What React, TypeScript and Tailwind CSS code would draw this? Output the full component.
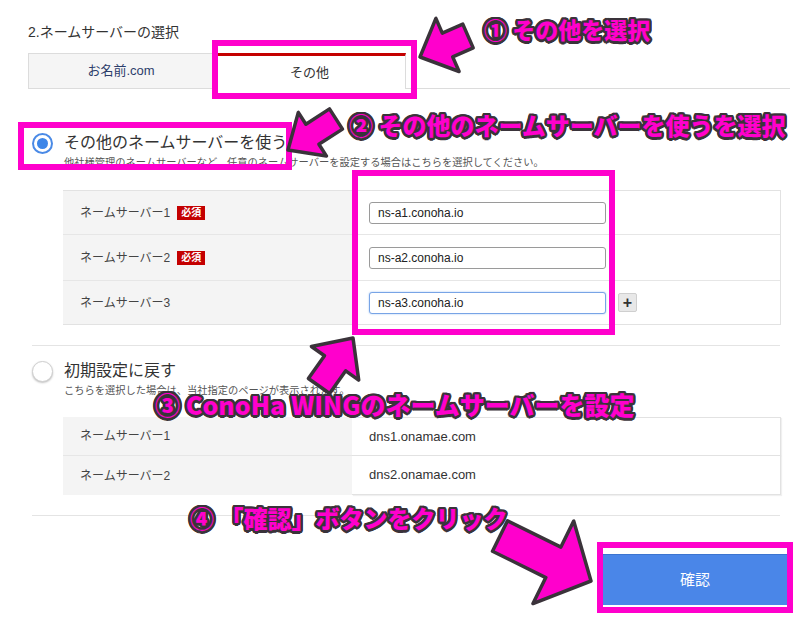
import React from 'react';

type Pt = [number, number];

// polygon for a fat annotation arrow, from tail to tip
function arrowPoints(tail: Pt, tip: Pt, shaft: number, head: number, headLen: number) {
  const dx = tip[0] - tail[0];
  const dy = tip[1] - tail[1];
  const len = Math.hypot(dx, dy);
  const ux = dx / len;
  const uy = dy / len;
  const px = -uy;
  const py = ux;
  const bx = tip[0] - ux * headLen;
  const by = tip[1] - uy * headLen;
  const pts: Pt[] = [
    [tail[0] + (px * shaft) / 2, tail[1] + (py * shaft) / 2],
    [bx + (px * shaft) / 2, by + (py * shaft) / 2],
    [bx + (px * head) / 2, by + (py * head) / 2],
    tip,
    [bx - (px * head) / 2, by - (py * head) / 2],
    [bx - (px * shaft) / 2, by - (py * shaft) / 2],
    [tail[0] - (px * shaft) / 2, tail[1] - (py * shaft) / 2],
  ];
  return pts.map((p) => `${p[0].toFixed(1)},${p[1].toFixed(1)}`).join(' ');
}

const arrows = [
  { tail: [468, 36] as Pt, tip: [420, 57] as Pt, shaft: 26, head: 58, headLen: 30 },
  { tail: [336, 119] as Pt, tip: [288, 150] as Pt, shaft: 24, head: 52, headLen: 29 },
  { tail: [319, 386] as Pt, tip: [353, 338] as Pt, shaft: 26, head: 58, headLen: 31 },
  { tail: [500, 536] as Pt, tip: [591, 581] as Pt, shaft: 34, head: 92, headLen: 42 },
];

const nsRows = [
  { label: 'ネームサーバー1', required: true, value: 'ns-a1.conoha.io', focus: false, h: 'h-[43px]' },
  { label: 'ネームサーバー2', required: true, value: 'ns-a2.conoha.io', focus: false, h: 'h-[46px]' },
  { label: 'ネームサーバー3', required: false, value: 'ns-a3.conoha.io', focus: true, h: 'h-[44px]' },
];

const defaultRows = [
  { label: 'ネームサーバー1', value: 'dns1.onamae.com', h: 'h-[38px]' },
  { label: 'ネームサーバー2', value: 'dns2.onamae.com', h: 'h-[40px]' },
];

const note =
  "absolute whitespace-nowrap font-['Noto_Sans_CJK_JP',sans-serif] font-black text-[#ff00cc] leading-none [text-shadow:2.5px_0_0_#3a333a,-2.5px_0_0_#3a333a,0_2.5px_0_#3a333a,0_-2.5px_0_#3a333a,1.8px_1.8px_0_#3a333a,-1.8px_1.8px_0_#3a333a,1.8px_-1.8px_0_#3a333a,-1.8px_-1.8px_0_#3a333a,2.3px_1px_0_#3a333a,-2.3px_1px_0_#3a333a,2.3px_-1px_0_#3a333a,-2.3px_-1px_0_#3a333a,1px_2.3px_0_#3a333a,-1px_2.3px_0_#3a333a,1px_-2.3px_0_#3a333a,-1px_-2.3px_0_#3a333a]";

export default function App() {
  return (
    <div className="relative w-[800px] h-[621px] overflow-hidden bg-white text-[#333] font-['Liberation_Sans','Noto_Sans_CJK_JP',sans-serif]">
      <div className="pl-[28px] pr-[10px] pt-[22px]">
        <h2 className="text-[14px] leading-[20px] text-[#333]">2.ネームサーバーの選択</h2>

        {/* tabs */}
        <div className="mt-[11px] flex h-[36px]">
          <div className="w-[186px] bg-[#f5f5f5] border border-[#dcdcdc] flex items-center justify-center text-[13px] text-[#2c3d6b]">
            お名前.com
          </div>
          <div className="w-[192px] bg-white border-t-[3px] border-t-[#c40000] border-r border-r-[#dcdcdc] flex items-center justify-center text-[13px] text-[#333]">
            その他
          </div>
          <div className="flex-1 border-b border-[#dcdcdc]" />
        </div>

        {/* other name servers */}
        <div className="mt-[42px] flex items-center h-[24px] pl-[4px]">
          <span className="w-[21px] h-[21px] rounded-full border-[2.5px] border-[#4a8ae6] bg-white flex items-center justify-center">
            <span className="w-[11px] h-[11px] rounded-full bg-[#3d86e8]" />
          </span>
          <span className="ml-[11px] text-[16px] leading-[24px] text-[#333]">その他のネームサーバーを使う</span>
        </div>
        <p className="pl-[36px] text-[10.25px] leading-[16px] text-[#555]">
          他社様管理のネームサーバーなど、任意のネームサーバーを設定する場合はこちらを選択してください。
        </p>

        <div className="mt-[19px] ml-[35px] w-[718px] border-y border-r border-[#e2e2e2]">
          {nsRows.map((row, i) => (
            <div key={row.label} className={`flex ${row.h} ${i > 0 ? 'border-t border-[#e6e6e6]' : ''}`}>
              <div className="w-[289px] bg-[#f4f4f4] flex items-center pl-[17px] text-[12px] text-[#444]">
                {row.label}
                {row.required && (
                  <span className="ml-[7px] bg-[#c40000] text-white text-[10px] font-bold leading-[14px] px-[4px]">必須</span>
                )}
              </div>
              <div className="flex-1 flex items-center pl-[17px]">
                <input
                  readOnly
                  value={row.value}
                  className={`w-[237px] h-[22px] rounded-[3px] bg-white pl-[8px] text-[12px] text-[#222] outline-none font-['Liberation_Sans','Noto_Sans_CJK_JP',sans-serif] ${
                    row.focus ? 'border border-[#78a4e6] shadow-[0_0_2px_#9cc0f2]' : 'border border-[#9a9a9a]'
                  }`}
                />
                {row.focus && (
                  <span className="ml-[12px] w-[19px] h-[19px] rounded-[2px] bg-[#e8e8e8] border border-[#cfcfcf] flex items-center justify-center text-[16px] font-bold leading-none text-[#333]">
                    +
                  </span>
                )}
              </div>
            </div>
          ))}
        </div>

        <div className="mt-[20px] ml-[4px] w-[748px] h-px bg-[#e4e4e4]" />

        {/* default settings */}
        <div className="mt-[13px] flex items-center h-[24px] pl-[4px]">
          <span className="w-[21px] h-[21px] rounded-full border border-[#cfcfcf] bg-white shadow-[0_1px_2px_rgba(0,0,0,0.25)]" />
          <span className="ml-[11px] text-[16px] leading-[24px] text-[#333]">初期設定に戻す</span>
        </div>
        <p className="pl-[36px] text-[10.25px] leading-[16px] text-[#555]">
          こちらを選択した場合は、当社指定のページが表示されます。
        </p>

        <div className="mt-[18px] ml-[35px] w-[718px] flex flex-col">
          {defaultRows.map((row, i) => (
            <div key={row.label} className={`flex ${row.h}`}>
              <div className={`w-[289px] bg-[#f4f4f4] flex items-center pl-[17px] text-[12px] text-[#444] ${i > 0 ? 'border-t border-[#e6e6e6]' : ''}`}>
                {row.label}
              </div>
              <div className={`flex-1 flex items-center pl-[17px] text-[13px] text-[#333] bg-white border-r border-[#e2e2e2] shadow-[1px_1px_1px_rgba(0,0,0,0.06)] ${i > 0 ? 'border-t border-b' : 'border-t'}`}>
                {row.value}
              </div>
            </div>
          ))}
        </div>

        <div className="mt-[20px] ml-[4px] w-[748px] h-px bg-[#e4e4e4]" />

        <div className="mt-[38px] flex justify-end pr-[3px]">
          <button className="w-[184px] h-[51px] bg-[#4a86e8] border-t border-[#3c74d0] text-white text-[15px]">確認</button>
        </div>
      </div>

      {/* annotations */}
      <div className="absolute left-[212px] top-[40px] w-[205px] h-[59px] border-[6px] border-[#ff00cc]" />
      <div className="absolute left-[18px] top-[122px] w-[274px] h-[48px] border-[6px] border-[#ff00cc]" />
      <div className="absolute left-[352px] top-[170px] w-[263px] h-[165px] border-[6px] border-[#ff00cc]" />
      <div className="absolute left-[597px] top-[542px] w-[196px] h-[71px] border-[6px] border-[#ff00cc]" />

      <svg className="absolute inset-0 pointer-events-none" width="800" height="621" viewBox="0 0 800 621">
        {arrows.map((a, i) => (
          <polygon
            key={i}
            points={arrowPoints(a.tail, a.tip, a.shaft, a.head, a.headLen)}
            fill="#ff00cc"
            stroke="#3a333a"
            strokeWidth="3.5"
            strokeLinejoin="round"
          />
        ))}
      </svg>

      <div className={`${note} left-[484px] top-[18px] text-[23px]`}>① その他を選択</div>
      <div className={`${note} left-[349px] top-[113px] text-[24px]`}>② その他のネームサーバーを使うを選択</div>
      <div className={`${note} left-[155px] top-[392px] text-[25px]`}>③ ConoHa WINGのネームサーバーを設定</div>
      <div className={`${note} left-[190px] top-[506px] text-[24px]`}>④ 「確認」ボタンをクリック</div>
    </div>
  );
}
